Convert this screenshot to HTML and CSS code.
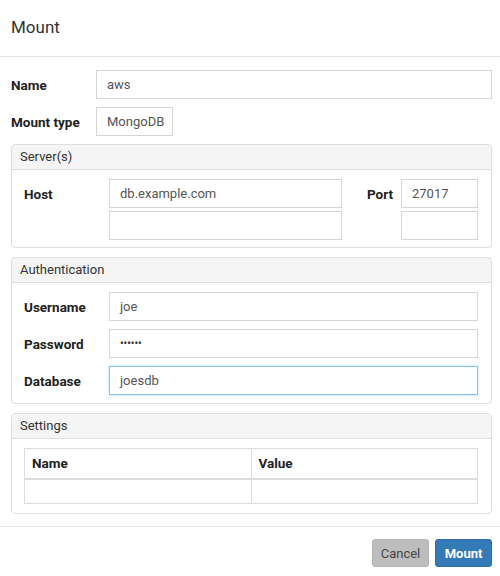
FILE: index.html
```html
<!DOCTYPE html>
<html>
<head>
<meta charset="utf-8">
<link rel="stylesheet" href="styles.css">
</head>
<body>
<div class="modal">
  <div class="modal-header"><h4 class="title">Mount</h4></div>
  <div class="modal-body">
    <div class="row"><label class="lbl">Name</label><div class="input wide">aws</div></div>
    <div class="row"><label class="lbl">Mount type</label><div class="input short">MongoDB</div></div>

    <div class="panel">
      <div class="panel-heading">Server(s)</div>
      <div class="panel-body servers">
        <label class="lbl host-lbl">Host</label>
        <div class="input host1">db.example.com</div>
        <label class="lbl port-lbl">Port</label>
        <div class="input port1">27017</div>
        <div class="input host2"></div>
        <div class="input port2"></div>
      </div>
    </div>

    <div class="panel">
      <div class="panel-heading">Authentication</div>
      <div class="panel-body auth">
        <div class="row"><label class="lbl">Username</label><div class="input wide">joe</div></div>
        <div class="row"><label class="lbl">Password</label><div class="input wide dots">••••••</div></div>
        <div class="row"><label class="lbl">Database</label><div class="input wide focus">joesdb</div></div>
      </div>
    </div>

    <div class="panel last">
      <div class="panel-heading">Settings</div>
      <div class="panel-body settings">
        <table class="tbl">
          <thead><tr><th>Name</th><th>Value</th></tr></thead>
          <tbody><tr><td></td><td></td></tr></tbody>
        </table>
      </div>
    </div>
  </div>
  <div class="modal-footer">
    <button class="btn btn-cancel">Cancel</button>
    <button class="btn btn-primary">Mount</button>
  </div>
</div>
</body>
</html>
```
FILE: styles.css
```css
* { box-sizing: border-box; }
html, body { margin: 0; padding: 0; background: #fff; }
body {
  font-family: Roboto, "Open Sans", sans-serif;
  font-size: 13px;
  color: #333;
  width: 500px;
}
.modal-header {
  height: 57px;
  border-bottom: 1px solid #e5e5e5;
  padding: 16px 11px 0;
}
.title {
  margin: 0;
  font-size: 17px;
  font-weight: normal;
  color: #333;
  line-height: 22px;
}
.modal-body {
  padding: 13px 8px 0 11px;
}
.row {
  display: flex;
  align-items: center;
  margin-bottom: 8px;
}
.lbl {
  font-weight: bold;
  font-size: 13.5px;
  color: #222;
  width: 85px;
  flex: none;
}
.input {
  height: 29px;
  border: 1px solid #d6d6d6;
  padding: 0 10px;
  line-height: 27px;
  color: #555;
  background: #fff;
}
.wide { flex: 1; }
.short { width: 77px; }
.dots { font-size: 10px; font-weight: bold; letter-spacing: 0; color: #333; }
.focus {
  border-color: #8cbfe9;
  box-shadow: 0 0 3px rgba(102, 175, 233, 0.45);
}
.panel {
  border: 1px solid #ddd;
  border-radius: 4px;
  margin-bottom: 9px;
}
.panel.last { margin-bottom: 0; }
.panel-heading {
  height: 25px;
  background: #f5f5f5;
  border-bottom: 1px solid #ddd;
  border-radius: 4px 4px 0 0;
  padding: 0 8px;
  line-height: 24px;
  color: #333;
}
.panel-body {
  padding: 9px 13px 7px 12px;
}
.servers {
  display: grid;
  grid-template-columns: 85px 1fr 59px 77px;
  grid-template-rows: 29px 29px;
  row-gap: 3px;
  align-items: center;
}
.servers .host-lbl { grid-column: 1; grid-row: 1; }
.servers .host1 { grid-column: 2; grid-row: 1; }
.servers .port-lbl { grid-column: 3; grid-row: 1; padding-left: 25px; width: auto; }
.servers .port1 { grid-column: 4; grid-row: 1; }
.servers .host2 { grid-column: 2; grid-row: 2; }
.servers .port2 { grid-column: 4; grid-row: 2; }
.auth .row:last-child { margin-bottom: 0; }
.auth { padding-bottom: 8px; }
.settings { padding: 9px 13px 9px 12px; }
.tbl {
  width: 100%;
  border-collapse: collapse;
  border: 1px solid #ddd;
}
.tbl th {
  text-align: left;
  font-weight: bold;
  font-size: 13.5px;
  color: #222;
  height: 30px;
  padding: 0 7px;
  border: 1px solid #ddd;
  border-bottom-width: 2px;
  width: 50%;
}
.tbl td {
  height: 25px;
  border: 1px solid #ddd;
}
.modal-footer {
  margin-top: 12px;
  border-top: 1px solid #e5e5e5;
  padding: 12px 8px 0;
  display: flex;
  justify-content: flex-end;
  gap: 6px;
}
.btn {
  font-family: inherit;
  font-size: 13px;
  height: 28px;
  border-radius: 3px;
  padding: 0;
  border: 1px solid transparent;
  cursor: pointer;
}
.btn-cancel {
  background: #bdbdbd;
  border-color: #b3b3b3;
  color: #444;
  width: 57px;
}
.btn-primary {
  background: #337ab7;
  border-color: #2e6da4;
  color: #fff;
  font-weight: bold;
  width: 57px;
}
```
